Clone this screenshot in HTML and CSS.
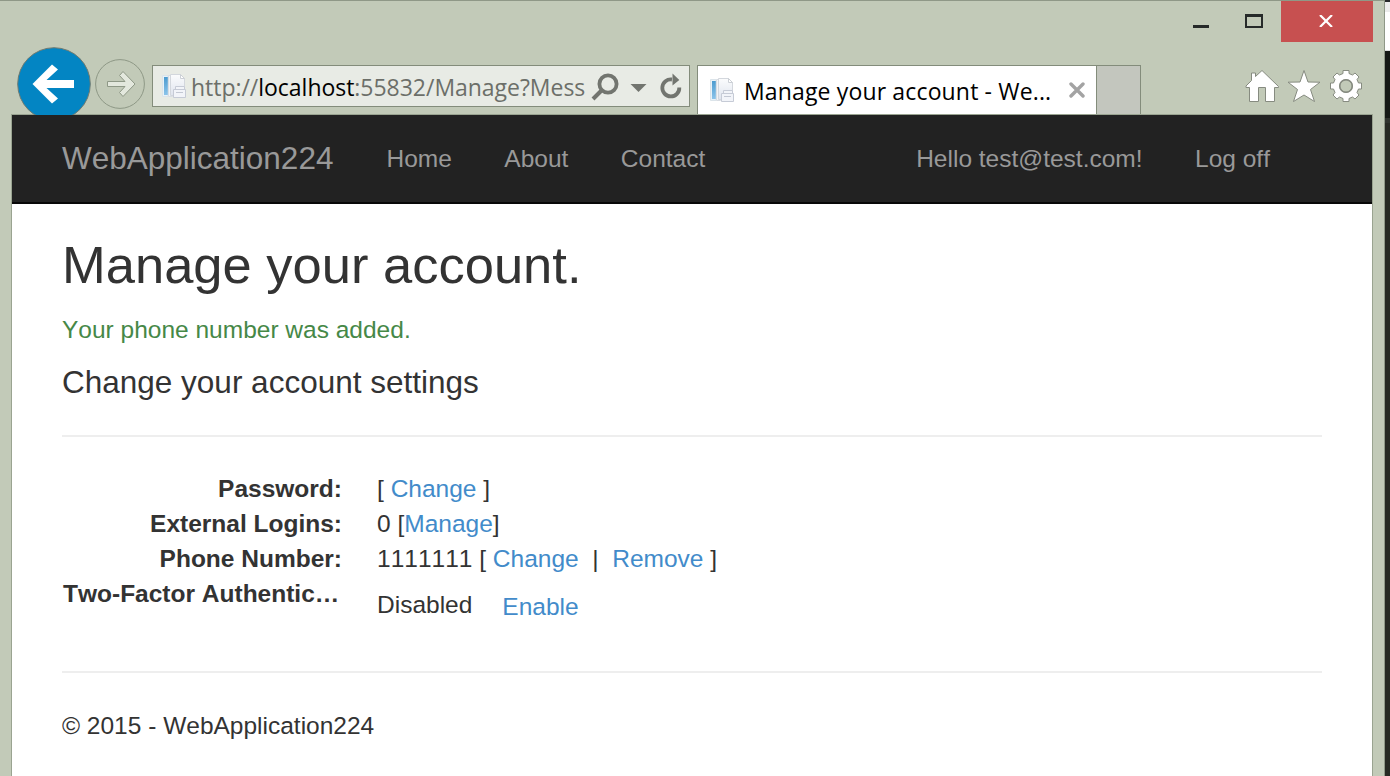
FILE: index.html
```html
<!DOCTYPE html>
<html lang="en">
<head>
<meta charset="utf-8">
<title>Manage your account - WebApplication224</title>
<link rel="stylesheet" href="styles.css">
</head>
<body>
<svg class="defs" width="0" height="0">
  <defs>
    <linearGradient id="bar" x1="0" y1="0" x2="0" y2="1"><stop offset="0" stop-color="#4b9bcf"/><stop offset="1" stop-color="#8cc4ea"/></linearGradient>
    <linearGradient id="sheet" x1="0" y1="0" x2="0" y2="1"><stop offset="0" stop-color="#fbfcfd"/><stop offset="1" stop-color="#dfe4ee"/></linearGradient>
    <symbol id="page" viewBox="0 0 24 24">
      <path d="M.5 1.500h5.500v21H.5z" fill="#e8f2f8" stroke="#dbe4ea"/>
      <path d="M2 3h3.800v18H2z" fill="url(#bar)"/>
      <path d="M6.500 1.500h4v21h-4z" fill="#f1f4f7" stroke="#d8dde3"/>
      <path d="M8.500 .5h10l4 4v17h-14z" fill="url(#sheet)" stroke="#d3d7dd"/>
      <path d="M18.500 .5v4h4z" fill="#fff" stroke="#ccd0d6"/>
      <path d="M13.500 12.500h9v4h-9z" fill="#f2f4f9" stroke="#c6cbd6"/>
      <path d="M11.500 15.500h12v8h-12z" fill="#f2f4f9" stroke="#c6cbd6"/>
      <path d="M14 18.500h7" stroke="#c3c8d3"/>
    </symbol>
  </defs>
</svg>
<div class="desktop">
  <div class="window">
    <div class="titlebar">
      <svg class="winctl" width="88" height="41" viewBox="0 0 88 41">
        <path d="M0 24h16v3H0z" fill="#262a29"/>
        <path d="M52 13h18v14H52zm2 3v9h14v-9z" fill="#262a29" fill-rule="evenodd"/>
      </svg>
      <div class="close">
        <svg width="14" height="12" viewBox="0 0 14 12"><path d="M1 0l12 12M13 0L1 12" stroke="#fff" stroke-width="2.200"/></svg>
      </div>
    </div>
    <div class="toolbar">
      <svg class="back" width="74" height="74" viewBox="0 0 74 74">
        <circle cx="37" cy="37" r="36.300" fill="#0385c3" stroke="#6f7a70"/>
        <path d="M15.500 37L35 17.500l6 5L29.500 33H57v8H29.500L41 51.500l-6 5z" fill="#fff"/>
      </svg>
      <svg class="forward" width="50" height="50" viewBox="0 0 50 50">
        <circle cx="25" cy="25" r="24.400" fill="none" stroke="#8e9886"/>
        <path d="M12.500 22.500h17.500L24.500 16.500l3.500-4 12 12.500L28 37.500l-3.500-4 5.500-6H12.500z" fill="#e3e8dd" stroke="#8e9886"/>
      </svg>
      <div class="address">
        <svg class="favicon" width="24" height="24"><use href="#page"/></svg>
        <span class="url">http://<b>localhost</b>:55832/Manage?Mess</span>
        <svg class="tools" width="92" height="30" viewBox="0 0 92 30">
          <g fill="none" stroke="#72756f">
            <circle cx="17" cy="13" r="8.600" stroke-width="3.800"/>
            <path d="M11 19L2 28" stroke-width="4"/>
            <path d="M88.300 16.500A8.500 8.500 0 1 1 81 8.500" stroke-width="3.800"/>
          </g>
          <path d="M39.500 13h16l-8 8zM81.500 2.500l6.800 6.500-6.800 5.500z" fill="#72756f"/>
        </svg>
      </div>
      <div class="tab">
        <svg class="favicon" width="24" height="24"><use href="#page"/></svg>
        <span class="tabtitle">Manage your account - We...</span>
        <svg class="tabclose" width="16" height="16" viewBox="0 0 16 16"><path d="M2 2l12 12M14 2L2 14" stroke="#a3a3a3" stroke-width="3.400" stroke-linecap="round"/></svg>
      </div>
      <div class="newtab"></div>
      <svg class="commands" width="118" height="36" viewBox="0 0 118 36">
        <g fill="#fff" stroke="#868b80" stroke-linejoin="round">
          <path d="M1 18.500V17L6.500 11.500V4H10.500V7.500L17 1.500 33.500 17.500V18.500H29.500V32.500H20.500V18.500H13.500V32.500H4.500V18.500z"/>
          <path d="M59 1.500l4 11.500 12 .2-9.500 7.300 4 12-10.500-6.500-10.500 6.500 4-12L43 13.200l12-.2z"/>
          <path fill-rule="evenodd" d="M98 4.500V1.500h6v3l3.500 1.500 2.500-2 4 4-2 2.500 1.500 3.500h3v6h-3l-1.500 3.500 2 2.500-4 4-2.500-2-3.500 1.500v3h-6v-3l-3.500-1.500-2.500 2-4-4 2-2.500-1.500-3.500h-3v-6h3l1.500-3.500-2-2.500 4-4 2.500 2zM101 10.700a6.300 6.300 0 1 0 .01 0z"/>
        </g>
        <circle cx="101" cy="17" r="6.300" fill="none" stroke="#868b80" stroke-width="1.500"/>
      </svg>
    </div>
    <div class="viewport">
      <nav class="navbar">
        <a class="brand">WebApplication224</a>
        <a>Home</a><a>About</a><a>Contact</a>
        <a class="user">Hello test@test.com!</a><a>Log off</a>
      </nav>
      <main class="container">
        <h2>Manage your account.</h2>
        <p class="success">Your phone number was added.</p>
        <h4>Change your account settings</h4>
        <hr>
        <dl>
          <dt>Password:</dt><dd>[ <a>Change</a> ]</dd>
          <dt>External Logins:</dt><dd>0 [<a>Manage</a>]</dd>
          <dt>Phone Number:</dt><dd>1111111 [ <a>Change</a> &nbsp;|&nbsp; <a>Remove</a> ]</dd>
          <dt class="long">Two-Factor Authentic…</dt><dd class="twofactor"><span>Disabled</span><a class="enable">Enable</a></dd>
        </dl>
        <hr class="foot">
        <footer>© 2015 - WebApplication224</footer>
      </main>
    </div>
  </div>
  <div class="behind"></div>
</div>
</body>
</html>
```

FILE: styles.css
```css
* { box-sizing: border-box; }
body { margin: 0; overflow: hidden; font-family: "Liberation Sans", Arial, sans-serif; font-size: 24.5px; line-height: 35px; color: #333; font-kerning: none; }
.defs { display: block; }
.desktop { display: flex; width: 1390px; height: 776px; }
.window { width: 1385px; background: #c2cab8; border-top: 1px solid #8f9887; border-right: 1px solid #8f9887; }
.behind { width: 5px; background: linear-gradient(#26282a 0 2px, #ececec 2px 12px, #fff 12px 50px, #ddd 50px 51px, #151815 51px 118px, #30332e 118px 123px, #272923 123px); }
svg { display: block; flex: none; }
.titlebar { display: flex; justify-content: flex-end; height: 41px; padding-right: 11px; }
.close { display: flex; align-items: center; justify-content: center; width: 92px; background: #c75050; padding: 0 2px 2px 0; }
.toolbar { display: flex; align-items: flex-start; height: 73px; padding-left: 17px; overflow: hidden; font-family: "Open Sans", "Noto Sans", sans-serif; font-size: 23px; }
.back { margin-top: 5px; }
.forward { margin: 17px 0 0 4px; }
.address { display: flex; align-items: center; width: 538px; height: 42px; margin: 23px 0 0 7px; padding-left: 9px; background: #e8ebe5; border: 1px solid #838c7b; }
.url { width: 398px; margin-left: 5px; padding-top: 3px; color: #6c6f69; white-space: nowrap; letter-spacing: -.03px; }
.url b { font-weight: 400; color: #000; }
.tools { margin-left: 2px; }
.tab { display: flex; align-items: center; width: 400px; height: 49px; margin: 23px 0 0 7px; padding-left: 12px; background: #fff; border: 1px solid #838c7b; border-bottom: 0; color: #000; }
.tabtitle { width: 309px; margin-left: 10px; padding-top: 2px; white-space: nowrap; letter-spacing: .15px; }
.tabclose { margin-left: 16px; }
.newtab { width: 44px; height: 49px; margin-top: 23px; background: #c3c6be; border: 1px solid #838c7b; border-left: 0; border-bottom: 0; }
.commands { margin: 27px 0 0 104px; }
.viewport { width: 1362px; height: 662px; margin: -1px 0 0 11px; background: #fff; border: 1px solid #9aa491; border-bottom: 0; }
.navbar { display: flex; height: 89px; padding: 26px 102px 0 50px; background: #222; border-bottom: 2px solid #080808; color: #999; }
.navbar a { margin-right: 52.5px; white-space: nowrap; }
.navbar .brand { margin-right: 53px; font-size: 31.5px; }
.navbar .user { margin-left: auto; }
.navbar a:last-child { margin-right: 0; }
.container { padding: 32px 50px 0; }
h2, h4 { margin: 0; font-weight: 400; line-height: 1.1; }
h2 { font-size: 52.5px; height: 58px; }
h4 { font-size: 31.5px; height: 35px; }
.success { margin: 18px 0 18px; color: #468847; }
hr { height: 2px; margin: 35px 0 34px; border: 0; background: #eee; }
dl { display: grid; grid-template-columns: 280px 1fr; column-gap: 35px; margin: 0; }
dt { text-align: right; white-space: nowrap; font-weight: 700; }
.long { padding-left: 1px; text-align: left; }
dd { margin: 0; }
dd a { color: #428bca; }
.twofactor { display: flex; height: 60px; padding-top: 11px; }
.enable { margin: 2px 0 0 30px; }
.foot { margin: 35px 0; }
```
